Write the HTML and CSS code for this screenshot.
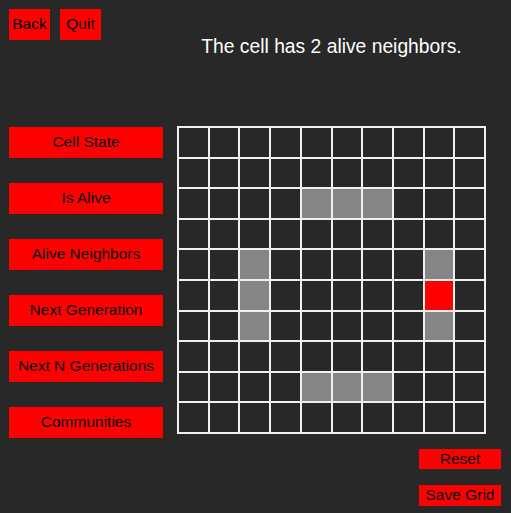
FILE: index.html
```html
<!DOCTYPE html>
<html>
<head>
<meta charset="utf-8">
<link rel="stylesheet" href="styles.css">
</head>
<body>
<div class="app">
  <div class="top-left">
    <button class="btn small">Back</button>
    <button class="btn small">Quit</button>
  </div>
  <div class="message">The cell has 2 alive neighbors.</div>
  <div class="side">
    <button class="btn wide">Cell State</button>
    <button class="btn wide">Is Alive</button>
    <button class="btn wide">Alive Neighbors</button>
    <button class="btn wide">Next Generation</button>
    <button class="btn wide">Next N Generations</button>
    <button class="btn wide">Communities</button>
  </div>
  <div class="board">
    <div></div><div></div><div></div><div></div><div></div><div></div><div></div><div></div><div></div><div></div>
    <div></div><div></div><div></div><div></div><div></div><div></div><div></div><div></div><div></div><div></div>
    <div></div><div></div><div></div><div></div><div class="alive"></div><div class="alive"></div><div class="alive"></div><div></div><div></div><div></div>
    <div></div><div></div><div></div><div></div><div></div><div></div><div></div><div></div><div></div><div></div>
    <div></div><div></div><div class="alive"></div><div></div><div></div><div></div><div></div><div></div><div class="alive"></div><div></div>
    <div></div><div></div><div class="alive"></div><div></div><div></div><div></div><div></div><div></div><div class="sel"></div><div></div>
    <div></div><div></div><div class="alive"></div><div></div><div></div><div></div><div></div><div></div><div class="alive"></div><div></div>
    <div></div><div></div><div></div><div></div><div></div><div></div><div></div><div></div><div></div><div></div>
    <div></div><div></div><div></div><div></div><div class="alive"></div><div class="alive"></div><div class="alive"></div><div></div><div></div><div></div>
    <div></div><div></div><div></div><div></div><div></div><div></div><div></div><div></div><div></div><div></div>
  </div>
</div>
<div class="footer">
  <button class="btn tiny">Reset</button>
  <button class="btn tiny save">Save Grid</button>
</div>
</body>
</html>
```
FILE: styles.css
```css
html, body {
  margin: 0;
  padding: 0;
  background: #282828;
  width: 511px;
  height: 513px;
  overflow: hidden;
  font-family: "Liberation Sans", Arial, sans-serif;
}

.app {
  display: grid;
  grid-template-columns: 168px 309px;
  grid-template-rows: 117px 308px;
  padding: 9px 0 0 9px;
}

.btn {
  background: #ff0000;
  color: #000;
  border: none;
  margin: 0;
  padding: 0 0 2px 0;
  box-sizing: border-box;
  font-family: "Liberation Sans", Arial, sans-serif;
  font-size: 15.5px;
  display: flex;
  align-items: center;
  justify-content: center;
  flex-shrink: 0;
}

.top-left {
  display: flex;
  gap: 10px;
  align-items: flex-start;
}

.small {
  width: 41px;
  height: 31px;
}

.message {
  color: #ffffff;
  font-size: 19.3px;
  line-height: 22px;
  text-align: center;
  margin-top: 27px;
  white-space: nowrap;
}

.side {
  display: flex;
  flex-direction: column;
  gap: 25px;
  margin-top: 1px;
}

.wide {
  width: 154px;
  height: 31px;
}

.board {
  width: 309px;
  height: 308px;
  box-sizing: border-box;
  background: #f0f0f0;
  padding: 2px;
  display: grid;
  grid-template-columns: repeat(10, 1fr);
  grid-template-rows: repeat(10, 1fr);
  gap: 2px;
}

.board div {
  background: #282828;
}

.board .alive {
  background: #858585;
}

.board .sel {
  background: #ff0000;
}

.footer {
  display: flex;
  flex-direction: column;
  align-items: flex-end;
  gap: 16px;
  padding-right: 10px;
  margin-top: 15px;
}

.tiny {
  width: 82px;
  height: 20px;
  padding-bottom: 1px;
}

.tiny.save {
  height: 21px;
}
```
